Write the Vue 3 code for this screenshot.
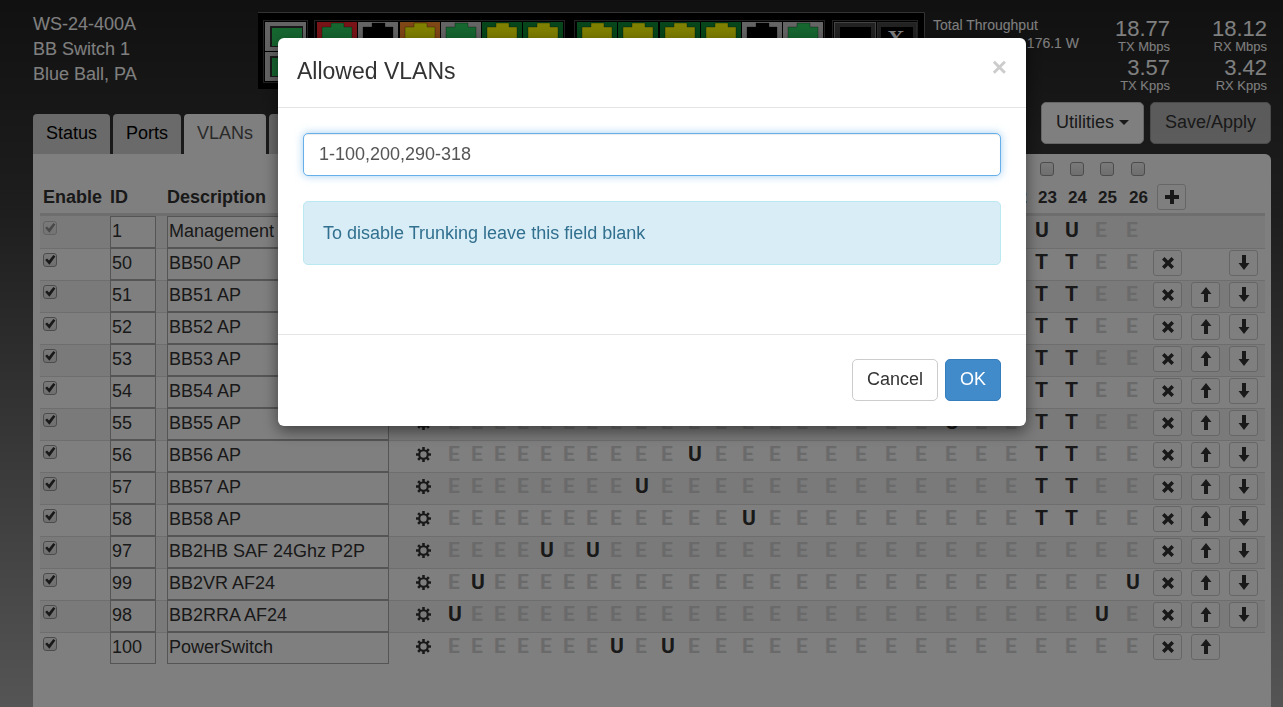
<template>
  <div class="page">
    <header class="top">
      <div class="device">
        <div>WS-24-400A</div>
        <div>BB Switch 1</div>
        <div>Blue Ball, PA</div>
      </div>

      <svg class="ports" width="667" height="77" viewBox="258 12 667 77" role="img" aria-label="Port status">
        <rect x="258" y="12" width="667" height="77" fill="#000" />
        <path d="M258 12.5H924.5V89" fill="none" stroke="#666" />
        <g fill="none" stroke="#444">
          <rect x="263.500" y="20.500" width="44" height="62" />
          <rect x="314.500" y="20.500" width="250" height="62" />
          <rect x="574.500" y="20.500" width="250" height="62" />
          <rect x="832.500" y="20.500" width="85" height="62" />
        </g>
        <g v-for="y in [22, 52]" :key="y">
          <rect x="265" :y="y" width="41" height="29" fill="#c8c8c8" />
          <rect x="270" :y="y + 4" width="33" height="21" fill="#333" />
          <rect x="272" :y="y + 6" width="30" height="18" fill="#2ccc60" />
        </g>
        <g v-for="p in jacks" :key="p.x" :transform="`translate(${p.x} 22)`">
          <rect width="40" height="29" :fill="p.frame" />
          <path d="M5 29V5H14V1H27V5H35V29Z" :fill="p.led" stroke="#000" stroke-opacity="0.300" />
          <rect y="30" width="40" height="29" :fill="p.frame" />
        </g>
        <rect x="834.500" y="22.500" width="41" height="58" fill="#444" stroke="#888" />
        <rect x="840" y="27" width="31" height="49" fill="#000" />
        <rect x="877.500" y="22.500" width="39" height="58" fill="#444" stroke="#555" />
        <rect x="881" y="27" width="32" height="49" fill="#000" />
        <text x="896" y="46" text-anchor="middle" class="port-mark">X</text>
      </svg>

      <div class="throughput">
        <div>Total Throughput</div>
        <div class="watts">176.1 W</div>
      </div>

      <div class="stats">
        <div v-for="s in stats" :key="s.label">
          <div class="stat-value">{{ s.value }}</div>
          <div class="stat-label">{{ s.label }}</div>
        </div>
      </div>
    </header>

    <div class="toolbar">
      <nav class="tabs">
        <button v-for="t in tabs" :key="t" type="button" class="tab" :class="{ active: t === activeTab }" @click="activeTab = t">{{ t }}</button>
      </nav>
      <div class="actions">
        <button type="button" class="btn">Utilities <span class="caret"></span></button>
        <button type="button" class="btn" disabled>Save/Apply</button>
      </div>
    </div>

    <main class="panel">
      <table>
        <colgroup>
          <col class="c-enable" />
          <col class="c-id" />
          <col />
          <col class="c-cog" />
          <col v-for="(w, i) in portWidths" :key="i" :style="{ width: `${w}px` }" />
          <col class="c-act" />
          <col class="c-act" />
          <col class="c-last" />
        </colgroup>
        <thead>
          <tr>
            <th class="first">Enable</th>
            <th>ID</th>
            <th>Description</th>
            <th></th>
            <th v-for="n in 26" :key="n" class="port">
              <input type="checkbox" :aria-label="`Isolate port ${n}`" />
              <span>{{ n }}</span>
            </th>
            <th colspan="3" class="add">
              <button type="button" class="icon-btn" aria-label="Add VLAN">
                <svg width="14" height="14" viewBox="0 0 14 14"><path d="M5 0H9V5H14V9H9V14H5V9H0V5H5Z" /></svg>
              </button>
            </th>
          </tr>
        </thead>
        <tbody>
          <tr v-for="(v, i) in vlans" :key="v.id">
            <td class="first"><input type="checkbox" v-model="v.enabled" :disabled="i === 0" :aria-label="`Enable VLAN ${v.id}`" /></td>
            <td class="field"><input type="text" class="id" v-model="v.id" aria-label="VLAN ID" /></td>
            <td class="field"><input type="text" class="desc" v-model="v.name" aria-label="Description" /></td>
            <td class="cog">
              <button type="button" class="plain" aria-label="VLAN settings">
                <svg width="15" height="15" viewBox="0 0 14 14">
                  <circle cx="7" cy="7" r="4" fill="none" stroke="#333" stroke-width="2" />
                  <path d="M7 0V3M7 11V14M0 7H3M11 7H14M2 2L4 4M10 10L12 12M12 2L10 4M4 10L2 12" stroke="#333" stroke-width="2.400" />
                </svg>
              </button>
            </td>
            <td v-for="n in 26" :key="n">
              <button type="button" class="plain mode" :class="{ excluded: modeOf(v, n) === 'E' }">{{ modeOf(v, n) }}</button>
            </td>
            <td>
              <button v-if="i > 0" type="button" class="icon-btn" aria-label="Delete">
                <svg width="14" height="14" viewBox="0 0 14 14"><path d="M3.500 1L7 4.500L10.500 1L13 3.500L9.500 7L13 10.500L10.500 13L7 9.500L3.500 13L1 10.500L4.500 7L1 3.500Z" /></svg>
              </button>
            </td>
            <td>
              <button v-if="i > 1" type="button" class="icon-btn" aria-label="Move up">
                <svg width="14" height="16" viewBox="0 0 14 16"><path d="M7 0L12.500 7H9V15H5V7H1.500Z" /></svg>
              </button>
            </td>
            <td>
              <button v-if="i > 0 && i < vlans.length - 1" type="button" class="icon-btn" aria-label="Move down">
                <svg width="14" height="16" viewBox="0 0 14 16"><path d="M7 15L12.500 8H9V0H5V8H1.500Z" /></svg>
              </button>
            </td>
          </tr>
        </tbody>
      </table>
    </main>

    <div class="backdrop">
      <div class="modal" role="dialog" aria-labelledby="modal-title">
        <div class="modal-header">
          <h4 id="modal-title">Allowed VLANs</h4>
          <button type="button" class="close" aria-label="Close">×</button>
        </div>
        <div class="modal-body">
          <input type="text" class="form-control" v-model="allowed" aria-labelledby="modal-title" />
          <div class="alert">To disable Trunking leave this field blank</div>
        </div>
        <div class="modal-footer">
          <button type="button" class="btn">Cancel</button>
          <button type="button" class="btn primary">OK</button>
        </div>
      </div>
    </div>
  </div>
</template>

<script setup>
import { reactive, ref } from "vue";

const tabs = ["Status", "Ports", "VLANs", "Device"];
const activeTab = ref("VLANs");
const allowed = ref("1-100,200,290-318");

const stats = [
  { value: "18.77", label: "TX Mbps" },
  { value: "18.12", label: "RX Mbps" },
  { value: "3.57", label: "TX Kpps" },
  { value: "3.42", label: "RX Kpps" },
];

const grey = "#c8c8c8";
const green = "#0c8c34";
const led = "#2ccc60";
const jacks = [
  { x: 317, frame: "#f02830", led },
  { x: 358, frame: grey, led: "#000" },
  { x: 400, frame: "#ff8c2c", led: "#ffff00" },
  { x: 441, frame: grey, led },
  { x: 482, frame: green, led: "#ffff00" },
  { x: 523, frame: green, led: "#ffff00" },
  { x: 577, frame: green, led: "#ffff00" },
  { x: 618, frame: green, led: "#ffff00" },
  { x: 660, frame: green, led: "#ffff00" },
  { x: 701, frame: green, led: "#ffff00" },
  { x: 742, frame: grey, led: "#000" },
  { x: 783, frame: grey, led },
];

const portWidths = [
  23, 23, 23, 23, 23, 23, 24, 25, 26, 27, 27, 27, 27,
  27, 29, 30, 30, 30, 30, 30, 30, 30, 30, 30, 31, 29,
];

const vlan = (id, name, untagged, tagged = []) => ({ id, name, untagged, tagged, enabled: true });

const vlans = reactive([
  vlan("1", "Management", [23, 24]),
  vlan("50", "BB50 AP", [], [23, 24]),
  vlan("51", "BB51 AP", [], [23, 24]),
  vlan("52", "BB52 AP", [], [23, 24]),
  vlan("53", "BB53 AP", [], [23, 24]),
  vlan("54", "BB54 AP", [], [23, 24]),
  vlan("55", "BB55 AP", [20], [23, 24]),
  vlan("56", "BB56 AP", [11], [23, 24]),
  vlan("57", "BB57 AP", [9], [23, 24]),
  vlan("58", "BB58 AP", [13], [23, 24]),
  vlan("97", "BB2HB SAF 24Ghz P2P", [5, 7]),
  vlan("99", "BB2VR AF24", [2, 26]),
  vlan("98", "BB2RRA AF24", [1, 25]),
  vlan("100", "PowerSwitch", [8, 10]),
]);

// U = untagged, T = tagged, E = excluded
function modeOf(v, port) {
  if (v.untagged.includes(port)) return "U";
  return v.tagged.includes(port) ? "T" : "E";
}
</script>

<style>
body {
  margin: 0;
}
</style>

<style scoped>
.page {
  box-sizing: border-box;
  display: flex;
  flex-direction: column;
  min-width: 1270px;
  min-height: 100vh;
  padding: 0 12px 0 33px;
  background: linear-gradient(#222, #3c3c3c 30%, #aaa);
  color: #333;
  font: 18px/25px "Liberation Sans", Arial, sans-serif;
}

button,
input {
  font: inherit;
  color: inherit;
  box-sizing: border-box;
  margin: 0;
}

.top {
  display: flex;
  box-sizing: border-box;
  height: 102px;
  padding-top: 12px;
  color: #fff;
}

.device {
  flex: none;
  width: 225px;
}

.ports {
  flex: none;
}

.port-mark {
  font: bold 24px "Liberation Serif", serif;
  fill: #fff;
}

.throughput {
  box-sizing: border-box;
  width: 154px;
  padding: 4px 0 0 8px;
  font-size: 14px;
  line-height: 18px;
}

.watts {
  text-align: right;
}

.stats {
  display: grid;
  grid-template-columns: 91px 97px;
  grid-auto-rows: 39px;
  margin-left: auto;
  padding: 5px 4px 0 0;
  text-align: right;
}

.stat-value {
  font-size: 22px;
  line-height: 24px;
}

.stat-label {
  font-size: 13px;
  line-height: 12px;
}

.toolbar {
  display: flex;
  justify-content: space-between;
  height: 52px;
}

.tabs {
  display: flex;
  align-items: flex-end;
  gap: 3px;
}

.tab {
  height: 40px;
  padding: 0 13px 2px;
  border: 0;
  border-radius: 4px 4px 0 0;
  background: #d4d4d4;
  color: #000;

  &.active {
    background: #fff;
    color: #555;
  }
}

.actions {
  display: flex;
  align-items: flex-start;
  gap: 6px;
}

.btn {
  height: 42px;
  padding: 0 14px 2px;
  border: 1px solid #ccc;
  border-radius: 5px;
  background: #fff;
  color: #333;

  &:disabled {
    opacity: 0.65;
  }

  &.primary {
    border-color: #357ebd;
    background: #428bca;
    color: #fff;
  }
}

.caret {
  display: inline-block;
  border: 5px solid transparent;
  border-top-color: #333;
  border-bottom: 0;
  vertical-align: middle;
}

.panel {
  flex: 1;
  padding: 0 6px 40px 7px;
  border-radius: 0 6px 0 0;
  background: #fff;
}

table {
  width: 100%;
  table-layout: fixed;
  border-collapse: separate;
  border-spacing: 0;
}

.c-enable {
  width: 70px;
}

.c-id,
.c-cog {
  width: 57px;
}

.c-act {
  width: 38px;
}

.c-last {
  width: 36px;
}

th {
  height: 62px;
  padding: 0 0 3px;
  border-bottom: 3px solid #ddd;
  box-sizing: border-box;
  text-align: left;
  vertical-align: bottom;
  white-space: nowrap;
}

.first {
  padding-left: 3px;
}

.port {
  padding-left: 5px;
  font-size: 17px;

  input {
    display: block;
    margin: 0 0 9px 2px;
  }
}

.add {
  padding: 0 0 3px 4px;
}

td {
  height: 32px;
  padding: 1px 0 0;
  border-top: 1px solid #ddd;
  box-sizing: border-box;
  vertical-align: top;
}

tbody tr:first-child td {
  border-top-color: transparent;
}

tbody tr:nth-child(odd) td {
  background: #f4f4f4;
}

td.first {
  padding: 4px 0 0 3px;
}

td.field {
  padding: 0;
}

input[type="checkbox"] {
  appearance: none;
  display: block;
  width: 14px;
  height: 14px;
  border: 1px solid #999;
  border-radius: 3px;
  background: linear-gradient(#f4f4f4, #ddd);

  &:checked::before {
    content: "";
    display: block;
    height: 12px;
    background: #333;
    clip-path: polygon(10% 50%, 25% 38%, 42% 55%, 78% 8%, 95% 20%, 45% 90%);
  }

  &:disabled {
    opacity: 0.5;
  }
}

input.id,
input.desc {
  display: block;
  width: 46px;
  height: 32px;
  margin-top: -1px;
  padding: 0 1px 2px;
  border: 1px solid #aaa;
  border-radius: 0;
  background: #fff;
}

input.desc {
  width: 100%;
}

td.cog {
  padding: 6px 0 0 27px;
}

.plain {
  display: block;
  padding: 0;
  border: 0;
  background: none;

  svg {
    display: block;
  }
}

.mode {
  padding-left: 2px;
  font-family: Roboto, sans-serif;
  font-size: 21px;
  font-weight: 700;
}

.excluded {
  color: #d4d4d4;
}

.icon-btn {
  display: flex;
  align-items: center;
  justify-content: center;
  width: 29px;
  height: 26px;
  padding: 0 0 1px;
  border: 1px solid #ccc;
  border-radius: 3px;
  background: #fff;
  fill: #333;
}

.backdrop {
  position: fixed;
  inset: 0;
  display: flex;
  justify-content: center;
  align-items: flex-start;
  padding: 38px 0 0 21px;
  background: rgba(0, 0, 0, 0.5);
}

.modal {
  width: 748px;
  border-radius: 6px;
  background: #fff;
  box-shadow: 0 5px 15px rgba(0, 0, 0, 0.5);
}

.modal-header {
  display: flex;
  justify-content: space-between;
  padding: 18px 19px 21px;
  border-bottom: 1px solid #e5e5e5;
}

h4 {
  margin: 0;
  font-size: 23px;
  font-weight: 400;
  line-height: 30px;
}

.close {
  height: 22px;
  padding: 0;
  border: 0;
  background: none;
  color: #ccc;
  font-size: 26px;
  font-weight: 700;
  line-height: 20px;
}

.modal-body {
  padding: 25px 25px 69px;
}

.form-control {
  display: block;
  width: 100%;
  height: 43px;
  padding: 0 15px;
  border: 1px solid #66afe9;
  border-radius: 5px;
  background: #fff;
  box-shadow: inset 0 1px 1px rgba(0, 0, 0, 0.08), 0 0 8px rgba(102, 175, 233, 0.6);
  color: #555;
}

.alert {
  margin-top: 25px;
  padding: 19px 19px 18px;
  border: 1px solid #bce8f1;
  border-radius: 5px;
  background: #d9edf7;
  color: #31708f;
}

.modal-footer {
  display: flex;
  justify-content: flex-end;
  gap: 7px;
  padding: 24px 25px 25px;
  border-top: 1px solid #e5e5e5;
}
</style>
